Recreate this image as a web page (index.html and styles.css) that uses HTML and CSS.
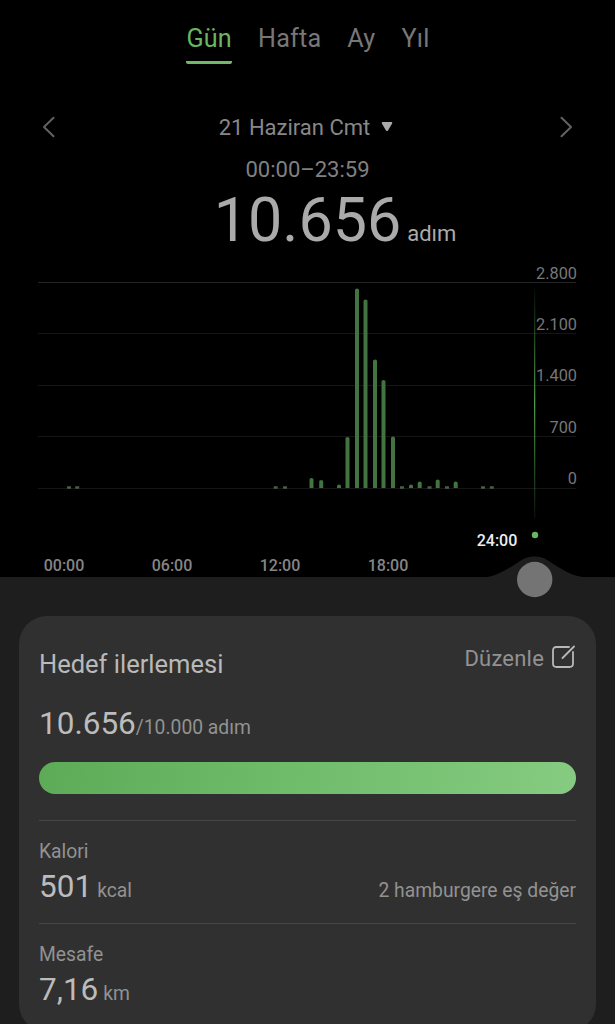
FILE: index.html
```html
<!DOCTYPE html>
<html lang="tr">
<head>
<meta charset="utf-8">
<title>Adımlar</title>
<link rel="stylesheet" href="styles.css">
</head>
<body>
<main class="screen">
  <nav class="tabs">
    <span class="tab active">Gün</span>
    <span class="tab">Hafta</span>
    <span class="tab">Ay</span>
    <span class="tab">Yıl</span>
  </nav>
  <section class="date-row">
    <svg class="chevron" width="13" height="22" viewBox="0 0 13 22"><path d="M11.500 1.800 2 11 11.500 20.200"/></svg>
    <div class="date"><span>21 Haziran Cmt</span><svg width="12" height="11" viewBox="0 0 12 11"><path d="M1.500 0h9q1.300.2.600 1.500L7 8.500q-1 1.200-2 0L.9 1.500Q.3.200 1.500 0Z"/></svg></div>
    <svg class="chevron" width="13" height="22" viewBox="0 0 13 22"><path d="M1.500 1.800 11 11 1.500 20.200"/></svg>
  </section>
  <div class="range">00:00–23:59</div>
  <div class="total"><strong>10.656</strong><span>adım</span></div>
  <svg class="chart" width="615" height="364" viewBox="0 252 615 364">
    <defs>
      <linearGradient id="marker" x1="0" y1="0" x2="0" y2="1">
        <stop offset="0" stop-color="#4f9a4b" stop-opacity=".05"/>
        <stop offset=".5" stop-color="#4f9a4b"/>
        <stop offset="1" stop-color="#4f9a4b" stop-opacity=".1"/>
      </linearGradient>
    </defs>
    <path class="grid" d="M38 333.500H576M38 385.500H576M38 436.500H576M38 488.500H576"/>
    <path class="grid top-line" d="M38 282.500H576"/>
    <g class="bars">
      <path d="M309.500 488v-8.500q0-1.500 2-1.500t2 1.500v8.500zM319.200 488v-6.500q0-1.500 2-1.500t2 1.500v6.500z"/>
      <path d="M337 488v-2q0-1.500 2-1.500t2 1.500v2zM409 488v-2q0-1.500 2-1.500t2 1.500v2z"/>
      <path d="M345.500 488v-49.500q0-1.500 2-1.500t2 1.500v49.500zM355 488v-198q0-1.500 2-1.500t2 1.500v198zM363.500 488v-187q0-1.500 2-1.500t2 1.500v187zM373 488v-127q0-1.500 2-1.500t2 1.500v127zM381.500 488v-106.500q0-1.500 2-1.500t2 1.500v106.500zM391 488v-50q0-1.500 2-1.500t2 1.500v50z"/>
      <path d="M417.700 488v-5q0-1.500 2-1.500t2 1.500v5zM435.700 488v-7q0-1.500 2-1.500t2 1.500v7zM453.700 488v-5q0-1.500 2-1.500t2 1.500v5z"/>
    </g>
    <path class="dots" d="M67 487.500h4M75.200 487.500h4M273.700 487.500h4M283 487.500h4M400 487.500h4M427.500 487.500h4M445 487.500h4M481 487.500h4M489.800 487.500h4"/>
    <rect x="534" y="288" width="1.300" height="230" fill="url(#marker)"/>
    <g class="y-axis">
      <text x="577" y="278.500">2.800</text><text x="577" y="329.800">2.100</text><text x="577" y="381">1.400</text><text x="577" y="432.500">700</text><text x="577" y="483.800">0</text>
    </g>
    <g class="x-axis">
      <text x="64" y="571">00:00</text><text x="172" y="571">06:00</text><text x="280" y="571">12:00</text><text x="388" y="571">18:00</text>
      <text class="current" x="497" y="546">24:00</text>
    </g>
    <circle cx="535" cy="535" r="3.200" fill="#65b95f"/>
    <path fill="#1e1e1e" d="M0 577.300H484C494 577 502 572 511 567S523 556.500 534.500 556.500 549 562 558 567 575 577 587 577.300H615V616H0Z"/>
    <circle cx="534.700" cy="579.500" r="17.700" fill="#747474"/>
  </svg>
  <section class="card">
    <header class="card-head">
      <h2>Hedef ilerlemesi</h2>
      <div class="edit"><span>Düzenle</span><svg width="25" height="24" viewBox="0 0 25 24"><path d="M18 2H5.500Q2 2 2 5.500v13Q2 22 5.500 22h13q3.500 0 3.500-3.500V7M11.500 13 23 1.500"/></svg></div>
    </header>
    <div class="metric goal"><b>10.656</b><span>/10.000 adım</span></div>
    <div class="progress"></div>
    <div class="row">
      <div class="label">Kalori</div>
      <div class="values"><div class="metric"><b>501</b><span class="unit">kcal</span></div><span class="note">2 hamburgere eş değer</span></div>
    </div>
    <div class="row">
      <div class="label">Mesafe</div>
      <div class="values"><div class="metric"><b>7,16</b><span class="unit">km</span></div></div>
    </div>
  </section>
</main>
</body>
</html>
```
FILE: styles.css
```css
* { box-sizing: border-box; }
body { margin: 0; background: #1e1e1e; font-family: Roboto, "Liberation Sans", sans-serif; }
.screen { width: 615px; height: 1024px; overflow: hidden; background: linear-gradient(#000 577px, #1e1e1e 577px); }
svg { display: block; flex: none; }
.tabs { display: flex; justify-content: center; gap: 26px; height: 112px; padding: 24px 0 0 1px; font-size: 25.200px; line-height: 30px; color: #777; }
.tab { height: 40px; letter-spacing: .2px; }
.tab.active { color: #68b663; background: linear-gradient(#6fb969, #6fb969) 0 100% / 100% 3px no-repeat; border-radius: 2px; }
.date-row { display: flex; justify-content: space-between; align-items: center; height: 30px; padding: 0 42px; font-size: 22px; line-height: 30px; color: #888; }
.chevron { fill: none; stroke: #626262; stroke-width: 2; stroke-linecap: round; stroke-linejoin: round; }
.date { display: flex; align-items: center; gap: 11px; padding: 2px 3px 0 0; }
.date svg { margin-top: -2px; fill: #aaa; }
.range { margin-top: 13px; height: 33px; text-align: center; font-size: 22px; line-height: 30px; color: #808080; }
.total { display: grid; grid-template-columns: 1fr auto 1fr; align-items: baseline; height: 64px; line-height: 64px; color: #aaa; }
.total strong { grid-column: 2; font-size: 61px; font-weight: 400; }
.total span { padding-left: 6px; font-size: 22px; }
.grid { fill: none; stroke: #151515; stroke-width: 1; }
.top-line { stroke: #262626; }
.bars { fill: #427340; }
.dots { stroke: #4c5c4b; stroke-width: 2.5; }
.y-axis { font-size: 16.300px; fill: #777; text-anchor: end; }
.x-axis { font-size: 16px; font-weight: 500; fill: #858585; text-anchor: middle; }
.x-axis .current { fill: #eee; }
.card { width: 577px; height: 416px; margin-left: 19px; padding: 26px 20px 0; border-radius: 28px; background: #303030; }
.card-head { display: flex; justify-content: space-between; height: 63px; }
h2 { margin: 6px 0 0; font-size: 25.500px; font-weight: 400; line-height: 32px; color: #b9b9b9; }
.edit { display: flex; height: 32px; gap: 7px; font-size: 22px; line-height: 34px; letter-spacing: .2px; color: #929292; }
.edit svg { margin-top: 3px; fill: none; stroke: #b8b8b8; stroke-width: 1.800; stroke-linecap: round; }
.metric { display: flex; align-items: baseline; font-size: 19.300px; line-height: 38px; color: #929292; }
.metric b { font-size: 31.500px; font-weight: 400; color: #bcbcbc; }
.metric .unit { margin-left: 5px; }
.goal { height: 57px; }
.progress { height: 32px; border-radius: 16px; background: linear-gradient(100deg, #5daa57, #70bd6c 50%, #86cb81); }
.row { height: 103px; padding-top: 18px; border-top: 1px solid #464646; }
.progress + .row { margin-top: 26px; }
.label { height: 29px; font-size: 19.300px; line-height: 26px; color: #929292; }
.values { display: flex; justify-content: space-between; align-items: baseline; }
.note { font-size: 19.300px; color: #929292; }
```
